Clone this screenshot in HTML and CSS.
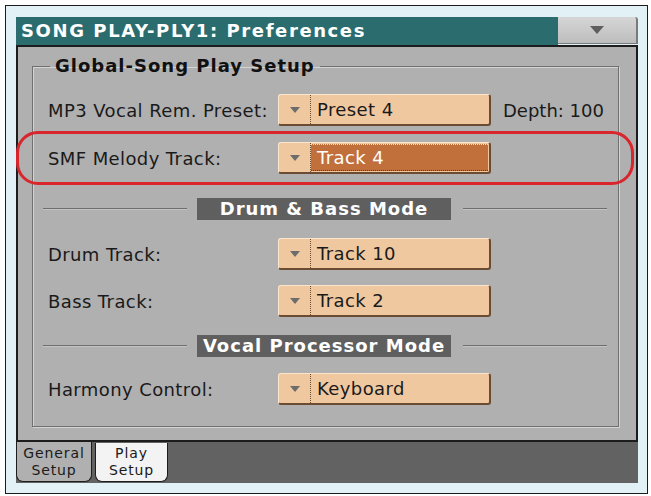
FILE: index.html
```html
<!DOCTYPE html>
<html lang="en">
<head>
  <meta charset="UTF-8" />
  <meta name="viewport" content="width=device-width, initial-scale=1.0"/>
  <title>Song Play Preferences</title>
  <link rel="stylesheet" href="styles.css">
</head>
<body>

<div class="frame">
  <div class="screen">

    <header class="title-bar">
      <div class="title">SONG PLAY-PLY1: Preferences</div>
      <div class="menu-btn">
        <svg width="14" height="8" viewBox="0 0 14 8"><polygon points="0,0 14,0 7,8" fill="#5e5e5e"/></svg>
      </div>
    </header>

    <div class="panel">
      <fieldset class="group">
        <legend>Global-Song Play Setup</legend>

        <div class="row first">
          <span class="label">MP3 Vocal Rem. Preset:</span>
          <div class="dropdown">
            <span class="arrow"><svg width="10" height="6" viewBox="0 0 10 6"><polygon points="0,0 10,0 5,6" fill="#6c6c6c"/></svg></span>
            <span class="value">Preset 4</span>
          </div>
          <span class="depth">Depth: 100</span>
        </div>

        <!-- highlighted row -->
        <div class="row marked">
          <span class="label">SMF Melody Track:</span>
          <div class="dropdown selected">
            <span class="arrow"><svg width="10" height="6" viewBox="0 0 10 6"><polygon points="0,0 10,0 5,6" fill="#6c6c6c"/></svg></span>
            <span class="value">Track 4</span>
          </div>
        </div>

        <div class="section">
          <span class="line"></span>
          <span class="section-title">Drum &amp; Bass Mode</span>
          <span class="line"></span>
        </div>

        <div class="row drum">
          <span class="label">Drum Track:</span>
          <div class="dropdown">
            <span class="arrow"><svg width="10" height="6" viewBox="0 0 10 6"><polygon points="0,0 10,0 5,6" fill="#6c6c6c"/></svg></span>
            <span class="value">Track 10</span>
          </div>
        </div>

        <div class="row bass">
          <span class="label">Bass Track:</span>
          <div class="dropdown">
            <span class="arrow"><svg width="10" height="6" viewBox="0 0 10 6"><polygon points="0,0 10,0 5,6" fill="#6c6c6c"/></svg></span>
            <span class="value">Track 2</span>
          </div>
        </div>

        <div class="section vocal">
          <span class="line"></span>
          <span class="section-title">Vocal Processor Mode</span>
          <span class="line"></span>
        </div>

        <div class="row harmony">
          <span class="label">Harmony Control:</span>
          <div class="dropdown">
            <span class="arrow"><svg width="10" height="6" viewBox="0 0 10 6"><polygon points="0,0 10,0 5,6" fill="#6c6c6c"/></svg></span>
            <span class="value">Keyboard</span>
          </div>
        </div>
      </fieldset>
    </div>

    <div class="tabs">
      <div class="tab active">General<br>Setup</div>
      <div class="tab">Play<br>Setup</div>
    </div>

  </div>
</div>

</body>
</html>
```

FILE: styles.css
```css
body {
  margin: 0;
  background: #fff;
  font-family: "DejaVu Sans", sans-serif;
}

.frame {
  margin: 5px 0 0 5px;
  width: 643px;
  height: 489px;
  box-sizing: border-box;
  border: 1px solid #1c1c1c;
  background: #e1f1f5;
  padding: 11px 9px 10px 10px;
}

.screen {
  width: 622px;
}

.title-bar {
  display: flex;
  height: 28px;
}

.title {
  flex: 1;
  background: #2b6c6e;
  color: #fff;
  font-weight: bold;
  font-size: 18px;
  letter-spacing: 1.6px;
  line-height: 28px;
  padding-left: 5px;
}

.menu-btn {
  width: 80px;
  height: 27px;
  box-sizing: border-box;
  background: linear-gradient(#d6d6d6, #bdbdbd);
  border-right: 2px solid #7a7a7a;
  border-bottom: 1px solid #7a7a7a;
  border-top-right-radius: 3px;
  display: flex;
  justify-content: center;
  align-items: center;
}

.panel {
  height: 397px;
  box-sizing: border-box;
  border: 2px solid #1c1c1c;
  background: #b0b0b0;
  padding-top: 9px;
}

.group {
  margin: 0 17px 0 14px;
  padding: 0 0 21px 0;
  min-width: 0;
  border: 1px solid #6f6f6f;
  box-shadow: 1px 1px 0 #d4d4d4, inset 1px 1px 0 #d4d4d4;
}

.group legend {
  margin-left: 17px;
  padding: 0 5px;
  font-weight: bold;
  font-size: 18px;
  letter-spacing: 1px;
  line-height: 20px;
  color: #111;
}

.row {
  display: flex;
  align-items: center;
  height: 32px;
  padding-left: 15px;
  font-size: 18px;
  letter-spacing: 0.4px;
  color: #1a1a1a;
}

.row.first { margin-top: 18px; }

.label {
  flex: 0 0 230px;
}

.dropdown {
  display: flex;
  width: 213px;
  height: 32px;
  box-sizing: border-box;
  background: #efc8a0;
  border: 1px solid #fbe5cd;
  border-right: 2px solid #6b4b32;
  border-bottom: 2px solid #6b4b32;
  border-radius: 3px;
}

.arrow {
  flex: 0 0 31px;
  display: flex;
  justify-content: center;
  align-items: center;
  border-right: 1px dotted #6b4b32;
}

.value {
  flex: 1;
  padding-left: 6px;
  line-height: 29px;
}

.dropdown.selected .value {
  margin: 1px 1px 1px 0;
  background: #c2703b;
  color: #fff;
  border-top: 1px dotted #f4e4d4;
  border-bottom: 1px dotted #5a3a22;
  line-height: 25px;
}

.depth {
  margin-left: 12px;
  letter-spacing: 0;
}

.row.marked {
  height: 32px;
  margin: 5px -16px 0 -17px;
  padding: 8px 0 8px 29px;
  border: 3px solid #d9252c;
  border-radius: 22px;
}

.section {
  display: flex;
  align-items: center;
  height: 22px;
  margin-top: 13px;
  padding: 0 11px 0 10px;
}

.section.vocal { margin-top: 18px; }

.line {
  flex: 1;
  height: 1px;
  background: #6e6e6e;
  border-bottom: 1px solid #c4c4c4;
}

.section-title {
  flex: 0 0 254px;
  margin: 0 12px 0 10px;
  background: #5f5f5f;
  color: #fff;
  font-weight: bold;
  font-size: 18px;
  letter-spacing: 1px;
  line-height: 22px;
  text-align: center;
}

.row.drum { margin-top: 18px; }
.row.bass { margin-top: 15px; }
.row.harmony { margin-top: 16px; }

.tabs {
  display: flex;
  height: 41px;
  background: #626262;
}

.tab {
  width: 73px;
  height: 39px;
  margin: 1px 0 0 3px;
  box-sizing: border-box;
  background: #f3f3f3;
  border: 1px solid #1c1c1c;
  border-top: none;
  border-radius: 0 0 7px 7px;
  font-size: 14px;
  letter-spacing: 0.9px;
  line-height: 17px;
  text-align: center;
  padding-top: 2px;
  color: #1a1a1a;
}

.tab.active {
  width: 76px;
  height: 40px;
  margin: 0;
  background: #b0b0b0;
  padding-top: 3px;
}
```
